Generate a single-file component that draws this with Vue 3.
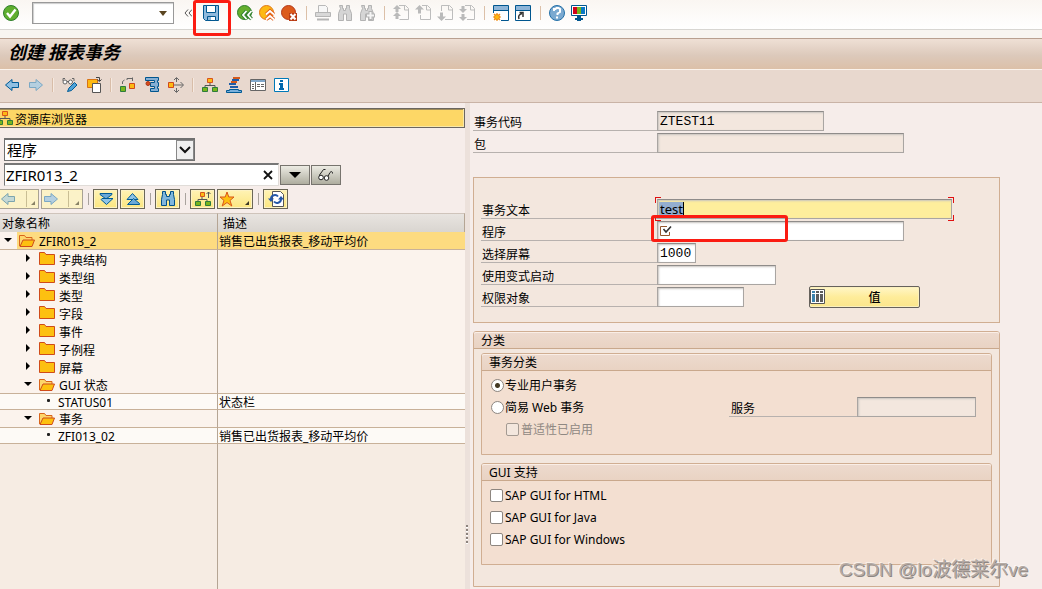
<script setup>
import { ref } from 'vue'

const systemGroups = [
  ['back', 'exit', 'cancel'],
  ['print', 'find', 'find-next'],
  ['page-first', 'page-up', 'page-down', 'page-last'],
  ['session', 'shortcut'],
  ['help', 'monitor']
]
const appGroups = [
  ['left', 'right-dim'],
  ['display-change', 'other-object'],
  ['activate', 'test', 'where-used'],
  ['hierarchy', 'align', 'window', 'info']
]

const tree = [
  { name: 'ZFIR013_2', desc: '销售已出货报表_移动平均价', kind: 'root', open: true },
  { name: '字典结构', kind: 'node' },
  { name: '类型组', kind: 'node' },
  { name: '类型', kind: 'node' },
  { name: '字段', kind: 'node' },
  { name: '事件', kind: 'node' },
  { name: '子例程', kind: 'node' },
  { name: '屏幕', kind: 'node' },
  { name: 'GUI 状态', kind: 'node', open: true },
  { name: 'STATUS01', desc: '状态栏', kind: 'leaf' },
  { name: '事务', kind: 'node', open: true },
  { name: 'ZFI013_02', desc: '销售已出货报表_移动平均价', kind: 'leaf' }
]

const guiOptions = ['SAP GUI for HTML', 'SAP GUI for Java', 'SAP GUI for Windows']

const command = ref('')
const objectType = ref('程序')
const objectName = ref('ZFIR013_2')
const tcode = ref('ZTEST11')
const text = ref('test')
const screen = ref('1000')
const classification = ref('pro')
</script>

<template>
  <div class="page">
    <svg class="sprite" aria-hidden="true">
      <symbol id="i-ok" viewBox="0 0 16 16"><circle cx="8" cy="8" r="7.5" fill="#5fae2e" stroke="#2f7f2b" /><path d="M4 8l3 3.5L12.500 4.500" fill="none" stroke="#fff" stroke-width="2.4" /></symbol>
      <symbol id="i-save" viewBox="0 0 16 16"><path d="M.5.5h15v15h-13l-2-2z" fill="#8fb9dc" stroke="#00568f" /><path d="M3.500 0.500h9v7h-9z" fill="#fff" stroke="#00568f" /><path d="M4.500 11.500h8v4h-8z" fill="#fff" stroke="#00568f" /><path d="M5 12h3v3H5z" fill="#8fb9dc" /></symbol>
      <symbol id="i-back" viewBox="0 0 16 16"><circle cx="7.500" cy="7.500" r="7" fill="#64ae2d" stroke="#2f7f2b" /><path d="M9.500 6L6 10l3.500 4M14.500 6L11 10l3.500 4" fill="none" stroke="#2f7f2b" stroke-width="3.600" /><path d="M9.500 6L6 10l3.500 4M14.500 6L11 10l3.500 4" fill="none" stroke="#fff" stroke-width="1.800" /></symbol>
      <symbol id="i-exit" viewBox="0 0 16 16"><circle cx="7.500" cy="7.500" r="7" fill="#fdb913" stroke="#e07818" /><path d="M7 9.500L11 6l4 3.500M7 14.500L11 11l4 3.500" fill="none" stroke="#e05b18" stroke-width="3.600" /><path d="M7 9.500L11 6l4 3.500M7 14.500L11 11l4 3.500" fill="none" stroke="#fff" stroke-width="1.800" /></symbol>
      <symbol id="i-cancel" viewBox="0 0 16 16"><circle cx="7.500" cy="7.500" r="7" fill="#dc5a1c" stroke="#b5381a" /><path d="M8 8h8v8H8z" fill="#b93a12" /><path d="M9.500 9l5 5.500M14.500 9l-5 5.500" stroke="#fff" stroke-width="2" /></symbol>
      <symbol id="i-print" viewBox="0 0 16 16"><path d="M3.500 7V.5h7l2 2V7" fill="#f7f7f7" stroke="#b9b9b9" /><path d="M.5 7.500h15v4H.5z" fill="#d8d8d8" stroke="#b5b5b5" /><path d="M2 14.500h12" stroke="#b5b5b5" stroke-width="2" /></symbol>
      <symbol id="i-find" viewBox="0 0 16 16"><path d="M2.500.5h3v3h1v2h2v-2h1v-3h3v3l2 5v7h-5V9h-3v6.500h-5v-7l2-5z" fill="#d5d5d5" stroke="#b3b3b3" /></symbol>
      <symbol id="i-find-next" viewBox="0 0 16 16"><path d="M2.500.5h3v3h1v2h2v-2h1v-3h3v3l2 5v7h-5V9h-3v6.500h-5v-7l2-5z" fill="#d5d5d5" stroke="#b3b3b3" /><path d="M11.500 6v9M7 10.500h9" stroke="#b3b3b3" stroke-width="4" /><path d="M11.500 7v7M8 10.500h7" stroke="#f5f5f5" stroke-width="2" /></symbol>
      <symbol id="i-page-first" viewBox="0 0 16 16"><path d="M6 .5h6.500l3 3v11h-9" fill="none" stroke="#bdbdbd" /><path d="M11.500 1v4h4" fill="none" stroke="#bdbdbd" /><path d="M4 0l4 4H5.500v3H2.500V4H0zM4 7l4 4H5.500v3H2.500v-3H0z" fill="#bababa" /></symbol>
      <symbol id="i-page-up" viewBox="0 0 16 16"><path d="M7 .5h5.500l3 3v11h-10V10" fill="none" stroke="#bdbdbd" /><path d="M11.500 1v4h4" fill="none" stroke="#bdbdbd" /><path d="M4.500 0L9 4.500H6v4H3v-4H0z" fill="#bababa" /></symbol>
      <symbol id="i-page-down" viewBox="0 0 16 16"><path d="M4.500 6V.5h8l3 3v11H8" fill="none" stroke="#bdbdbd" /><path d="M11.500 1v4h4" fill="none" stroke="#bdbdbd" /><path d="M4.500 16L9 11.500H6v-4H3v4H0z" fill="#bababa" /></symbol>
      <symbol id="i-page-last" viewBox="0 0 16 16"><path d="M6 .5h6.500l3 3v11H8" fill="none" stroke="#bdbdbd" /><path d="M11.500 1v4h4" fill="none" stroke="#bdbdbd" /><path d="M2.500 1h3v3H8L4 8 0 4h2.500zM2.500 9h3v3H8l-4 4-4-4h2.500z" fill="#bababa" /></symbol>
      <symbol id="i-session" viewBox="0 0 16 16"><path d="M.5.5h15v15H.5z" fill="#fff" stroke="#00568f" /><path d="M1 1h14v4H1z" fill="#8eb5d8" /><path d="M0 5.500h16" stroke="#00568f" /><path d="M0 8h8v8H0z" fill="#fff" /><path d="M4 8v8M0 12h8M1 9l6 6M7 9l-6 6" stroke="#ef8b12" stroke-width="1.200" /><circle cx="4" cy="12" r="2.500" fill="#fdb913" stroke="#ef8b12" /></symbol>
      <symbol id="i-shortcut" viewBox="0 0 16 16"><path d="M.5.5h15v15H.5z" fill="#fff" stroke="#00568f" /><path d="M1 1h14v4H1z" fill="#8eb5d8" /><path d="M0 5.500h16" stroke="#00568f" /><path d="M4 14c-1-3 0-4.500 3-5.500M4.500 7.500H8V12" fill="none" stroke="#333" stroke-width="1.500" /></symbol>
      <symbol id="i-help" viewBox="0 0 16 16"><circle cx="8" cy="8" r="7.500" fill="#7ba9d0" stroke="#2370a8" /><path d="M5 6V4h1.500l1-1h2l1.500 1v3L8.500 8.500V10M8 11.500v2" fill="none" stroke="#fff" stroke-width="2" /></symbol>
      <symbol id="i-monitor" viewBox="0 0 16 16"><path d="M.5.5h15v10H.5z" fill="#fff" stroke="#00568f" /><path d="M2 2h4v7H2z" fill="#d0021b" /><path d="M6 2h4v7H6z" fill="#78b51c" /><path d="M10 2h4v7h-4z" fill="#0878c6" /><path d="M6 11h4v2h2v2h-2v1H6v-1H4v-2h2z" fill="#00568f" /></symbol>
      <symbol id="i-left" viewBox="0 0 16 16"><path d="M1.500 8L8 2.500v3h6.500v5H8v3z" fill="#8fbfe2" stroke="#005b96" /></symbol>
      <symbol id="i-right-dim" viewBox="0 0 16 16"><path d="M14.500 8L8 2.500v3H1.500v5H8v3z" fill="#b4cfe0" stroke="#7ba8c4" /></symbol>
      <symbol id="i-display-change" viewBox="0 0 16 16"><path d="M1 4V1.500h2M12 4V1.500h-2" fill="none" stroke="#666" /><circle cx="3" cy="5" r="2" fill="#fff" stroke="#666" /><circle cx="8.500" cy="5" r="2" fill="#fff" stroke="#666" /><path d="M5 4.500h2" stroke="#666" /><path d="M5.500 14.500L7 11l5.500-5.500L15 8l-5.500 5.500z" fill="#4fa3d8" stroke="#005b96" /></symbol>
      <symbol id="i-other-object" viewBox="0 0 16 16"><path d="M1.500 2.500h10v8h-10z" fill="#fdb913" stroke="#d87316" /><path d="M6.500 6.500h8v9h-8z" fill="#fff" stroke="#555" /><path d="M10 .5h3.500V4M11 2.500l2.500 2 2-2" fill="none" stroke="#444" /></symbol>
      <symbol id="i-activate" viewBox="0 0 16 16"><path d="M.5 9.500h5v5h-5z" fill="#79b51c" stroke="#2d7d3c" /><path d="M9.500 6.500h5v5h-5z" fill="#fdb913" stroke="#d0481c" /><path d="M2.500 7V4.500l2-1.500M7 3V1.500h5M12.500 4V.5" fill="none" stroke="#666" /></symbol>
      <symbol id="i-test" viewBox="0 0 16 16"><path d="M1.500.5h13v3h-1v2h1v4h-1v2h1v3h-8v-3h4v-2h-4v-4h4v-2h-9z" fill="#86afd3" stroke="#00568f" /><circle cx="4" cy="6.500" r="2" fill="#d94b1a" stroke="#a8381a" /></symbol>
      <symbol id="i-where-used" viewBox="0 0 16 16"><path d="M.5 5.500h5v5h-5z" fill="#fdb913" stroke="#d0481c" /><path d="M6 8h9M8.500 5V1M8.500 11v4M12.500 5L15.500 8l-3 3M6 3L8.500 .5 11 3M6 13l2.500 2.500 2.500-2.500" fill="none" stroke="#666" /></symbol>
      <symbol id="i-hierarchy" viewBox="0 0 16 16"><path d="M8 5v4M3 10V8.500h10V10" fill="none" stroke="#555" /><path d="M5.500 1.500h5v4h-5z" fill="#fdb913" stroke="#d8541c" /><path d="M.5 10.500h5v4h-5zM10.500 10.500h5v4h-5z" fill="#79b51c" stroke="#2d7d3c" /></symbol>
      <symbol id="i-align" viewBox="0 0 16 16"><path d="M7 1h7M5 5h6" stroke="#d45b1c" stroke-width="2" /><path d="M6 3h7M3 7h7M4 10h8" stroke="#1f5da8" stroke-width="2" /><path d="M.5 15.500v-2h3v-1h9v1h3v2z" fill="#79b0dc" stroke="#005b96" /></symbol>
      <symbol id="i-window" viewBox="0 0 16 16"><path d="M.5 2.500h15v11H.5z" fill="#fff" stroke="#666" /><path d="M1 3h14v2H1z" fill="#7fa6c9" /><path d="M5.500 5v8M2 7.500h2M2 9.500h2M2 11.500h2M7 7.500h3M11 7.500h3M7 9.500h3M11 9.500h3" stroke="#666" /></symbol>
      <symbol id="i-info" viewBox="0 0 16 16"><path d="M.5 1.500h14v13H.5z" fill="#fff" stroke="#0079b8" /><path d="M6 3h3v2H6zM5 6h4v5h1v2H5v-2h1V8H5z" fill="#0068ad" /></symbol>
      <symbol id="i-expand" viewBox="0 0 16 16"><path d="M2 2.500h12v1L8 8 2 3.500z" fill="#69a9d8" stroke="#005b96" /><path d="M4 7.500h11L8.500 13.500 3 8.500z" fill="#8ec4e6" stroke="#005b96" /></symbol>
      <symbol id="i-collapse" viewBox="0 0 16 16"><path d="M2 8.500h11L7.500 2.500z" fill="#8ec4e6" stroke="#005b96" /><path d="M2.500 13.500h12v-1L8.500 7.500z" fill="#69a9d8" stroke="#005b96" /></symbol>
      <symbol id="i-binoculars" viewBox="0 0 16 16"><path d="M2.500.5h3v3h1v2h3v-2h1v-3h3v3l1 5v6h-5V9h-3v5.500h-5v-6l1-5z" fill="#7fb6dc" stroke="#005089" /></symbol>
      <symbol id="i-subtree" viewBox="0 0 16 16"><path d="M7 5v4M3 10V8.500h9V10M13.500 7V1M11.500 3l2-2 2 2" fill="none" stroke="#555" /><path d="M5.500 1.500h4v4h-4z" fill="#fdb913" stroke="#d8541c" /><path d="M.5 10.500h5v4h-5zM10.500 10.500h5v4h-5z" fill="#79b51c" stroke="#2d7d3c" /></symbol>
      <symbol id="i-star" viewBox="0 0 16 16"><path d="M8 1l1.800 5H15l-4 3.500 1.800 5.500L8 11.500 3.200 15 5 9.500 1 6h5.200z" fill="#fdc010" stroke="#d8541c" /></symbol>
      <symbol id="i-refresh" viewBox="0 0 16 16"><path d="M4.500.5h8l3 3v12h-11z" fill="#fff" stroke="#555" /><path d="M3 8c0-4 5-5 7-2.500M13 8c0 4-5 5-7 2.500" fill="none" stroke="#2457a8" stroke-width="2" /><path d="M0 7.500h6L3 11zM10 8.500h6L13 5z" fill="#2457a8" /></symbol>
      <symbol id="i-glasses" viewBox="0 0 16 16"><path d="M1.500 10V8l4-5.500h2M9 11l3-5.500c1-1.500 3-1 2.500 1" fill="none" stroke="#222" /><circle cx="3" cy="10.500" r="2.300" fill="#fff" stroke="#222" /><circle cx="8.500" cy="11" r="2.300" fill="#fff" stroke="#222" /></symbol>
      <symbol id="i-folder" viewBox="0 0 16 13"><path d="M.5.5h5l1.500 2h8.500v10H.5z" fill="#fdc010" stroke="#cf4b1a" /></symbol>
      <symbol id="i-folder-open" viewBox="0 0 16 13"><path d="M.5 12V1.500h5l1.500 2h6V6" fill="#fdd66a" stroke="#d8641c" /><path d="M1 12.500l3-6.500h11.500l-2.500 6.500z" fill="#fdc010" stroke="#cf4b1a" /></symbol>
      <symbol id="i-required" viewBox="0 0 12 12"><path d="M7 1.500H.5v9h9V7" fill="none" stroke="#96582e" /><path d="M3.500 4l2.500 3L11 1.500" fill="none" stroke="#333" stroke-width="1.600" /></symbol>
      <symbol id="i-columns" viewBox="0 0 16 16"><path d="M.5.5h14v14H.5z" fill="#fff" stroke="#555" /><path d="M2 2h3v2H2zM2 5h3v8H2z" fill="#3c83ad" /><path d="M6 2h3v2H6zM10 2h3v2h-3zM6 5h3v8H6zM10 5h3v8h-3z" fill="#5c5c5c" /></symbol>
    </svg>

    <header class="system-bar">
      <button class="icon-btn" aria-label="确认"><svg><use href="#i-ok" /></svg></button>
      <div class="command">
        <input v-model="command" aria-label="命令" />
        <button aria-label="历史"><i class="caret"></i></button>
      </div>
      <button class="chevrons" aria-label="收起"><svg viewBox="0 0 8 8"><path d="M4 .5L1 4l3 3.500M8 .5L5 4l3 3.500" fill="none" stroke="#555" /></svg></button>
      <div class="save">
        <button class="icon-btn" aria-label="保存"><svg><use href="#i-save" /></svg></button>
        <span class="mark mark-save"></span>
      </div>
      <template v-for="(group, g) in systemGroups" :key="g">
        <span class="bar-sep"></span>
        <button v-for="name in group" :key="name" class="icon-btn" :aria-label="name"><svg><use :href="'#i-' + name" /></svg></button>
      </template>
    </header>
    <div class="strip"></div>
    <h1 class="title">创建 报表事务</h1>
    <nav class="app-bar">
      <template v-for="(group, g) in appGroups" :key="g">
        <span v-if="g" class="app-sep"></span>
        <button v-for="name in group" :key="name" class="icon-btn" :aria-label="name"><svg><use :href="'#i-' + name" /></svg></button>
      </template>
    </nav>

    <main class="content">
      <section class="browser">
        <h2 class="browser-title"><svg><use href="#i-hierarchy" /></svg><span>资源库浏览器</span></h2>
        <div class="type-select">
          <select v-model="objectType" aria-label="对象类型"><option>程序</option></select>
          <span class="drop"><svg viewBox="0 0 12 8"><path d="M1 1l5 5 5-5" fill="none" stroke="#111" stroke-width="2" /></svg></span>
        </div>
        <div class="name-row">
          <div class="name-field">
            <input v-model="objectName" aria-label="对象名称" />
            <button aria-label="清除"><svg viewBox="0 0 10 10"><path d="M1 1l8 8M9 1L1 9" stroke="#111" stroke-width="1.800" /></svg></button>
          </div>
          <button class="grey-btn" aria-label="历史"><i class="caret wide"></i></button>
          <button class="grey-btn" aria-label="显示"><svg><use href="#i-glasses" /></svg></button>
        </div>
        <div class="tree-bar">
          <button class="gold-btn split dim first" aria-label="后退"><svg><use href="#i-left" /></svg><i class="corner"></i></button>
          <button class="gold-btn split dim" aria-label="前进"><svg><use href="#i-right-dim" /></svg><i class="corner"></i></button>
          <span class="tree-sep"></span>
          <button class="gold-btn" aria-label="展开"><svg><use href="#i-expand" /></svg></button>
          <button class="gold-btn" aria-label="折叠"><svg><use href="#i-collapse" /></svg></button>
          <span class="tree-sep"></span>
          <button class="gold-btn" aria-label="查找"><svg><use href="#i-binoculars" /></svg></button>
          <span class="tree-sep"></span>
          <button class="gold-btn" aria-label="上级"><svg><use href="#i-subtree" /></svg></button>
          <button class="gold-btn fav" aria-label="收藏"><svg><use href="#i-star" /></svg><i class="corner"></i></button>
          <span class="tree-sep"></span>
          <button class="gold-btn" aria-label="刷新"><svg><use href="#i-refresh" /></svg></button>
        </div>
        <div class="tree">
          <table>
            <thead><tr><th class="col-name">对象名称</th><th>描述</th></tr></thead>
            <tbody>
              <tr v-for="row in tree" :key="row.name" :class="[row.kind, { open: row.open }]">
                <td>
                  <div class="cell">
                    <span class="twist"><i></i></span>
                    <svg v-if="row.kind !== 'leaf'" class="folder"><use :href="row.open ? '#i-folder-open' : '#i-folder'" /></svg>
                    <span class="name">{{ row.name }}</span>
                  </div>
                </td>
                <td><div class="name">{{ row.desc }}</div></td>
              </tr>
            </tbody>
          </table>
        </div>
      </section>

      <div class="splitter"></div>

      <section class="detail">
        <div class="rows">
          <div class="row"><label for="tcode">事务代码</label><input id="tcode" v-model="tcode" class="field w-code mono" readonly /></div>
          <div class="row"><label for="pkg">包</label><input id="pkg" class="field w-long" readonly /></div>
        </div>

        <div class="panel rows">
          <div class="row"><label for="ttext">事务文本</label><div class="focus"><input id="ttext" v-model="text" class="field active" /></div></div>
          <div class="row">
            <label for="prog">程序</label>
            <div class="required">
              <input id="prog" class="field w-long" />
              <svg><use href="#i-required" /></svg>
              <span class="mark mark-prog"></span>
            </div>
          </div>
          <div class="row"><label for="scr">选择屏幕</label><input id="scr" v-model="screen" class="field w-scr mono" /></div>
          <div class="row"><label for="variant">使用变式启动</label><input id="variant" class="field w-mid" /></div>
          <div class="row">
            <label for="auth">权限对象</label><input id="auth" class="field w-auth" />
            <button class="value-btn"><svg><use href="#i-columns" /></svg><span>值</span></button>
          </div>
        </div>

        <section class="group outer">
          <h3>分类</h3>
          <section class="group">
            <h3>事务分类</h3>
            <div class="options">
              <div class="option"><input id="pro" v-model="classification" type="radio" value="pro" /><label for="pro">专业用户事务</label></div>
              <div class="option">
                <input id="web" v-model="classification" type="radio" value="web" /><label for="web">简易 Web 事务</label>
                <div class="service"><label for="svc">服务</label><input id="svc" class="field w-mid" readonly /></div>
              </div>
              <div class="option nested"><input id="pervasive" type="checkbox" disabled /><label for="pervasive">普适性已启用</label></div>
            </div>
          </section>
          <section class="group">
            <h3>GUI 支持</h3>
            <div class="options">
              <div v-for="(opt, i) in guiOptions" :key="opt" class="option"><input :id="'gui' + i" type="checkbox" /><label :for="'gui' + i">{{ opt }}</label></div>
            </div>
          </section>
        </section>
      </section>
    </main>
    <div class="watermark">CSDN @lo波德莱尔ve</div>
  </div>
</template>

<style>
body { margin: 0; }
</style>

<style scoped>
.page {
  position: relative;
  display: flex;
  flex-direction: column;
  min-height: 100vh;
  overflow: hidden;
  background: #f6edea;
  color: #000;
  font: 12px/18px "Noto Sans", "Noto Sans CJK SC", sans-serif;
}
.page *, .page *::before { box-sizing: border-box; }
.sprite { position: absolute; width: 0; height: 0; }
button { padding: 0; border: 0; background: none; font: inherit; color: inherit; }
input, select { font: inherit; color: inherit; outline: 0; border-radius: 0; }
h1, h2, h3 { margin: 0; font-weight: normal; font-size: 12px; }
svg { display: block; flex: none; width: 16px; height: 16px; }
.icon-btn { flex: none; width: 16px; height: 16px; }

.system-bar {
  display: flex;
  align-items: center;
  gap: 6px;
  height: 30px;
  padding: 0 3px 3px;
  border-bottom: 1px solid #d8d6d2;
  background: linear-gradient(#faf6f2, #fff);
}
.command {
  display: flex;
  width: 142px;
  height: 22px;
  margin-left: 7px;
  border: 1px solid #999;
  box-shadow: inset 1px 1px 1px #ccc;
  background: #fff;
}
.command input { flex: 1; min-width: 0; border: 0; background: none; }
.command button { display: flex; align-items: center; justify-content: center; width: 20px; }
.caret { border: 4px solid transparent; border-top: 5px solid #5a4520; border-bottom: 0; }
.caret.wide { border-width: 6px 6px 0; border-top-color: #000; }
.chevrons { width: 8px; margin-left: 4px; }
.chevrons svg { width: 8px; height: 8px; }
.save { position: relative; display: flex; margin-left: 5px; }
.mark { position: absolute; z-index: 2; border: 3px solid #fb1c12; border-radius: 3px; pointer-events: none; }
.mark-save { inset: -5px -12px -15px -10px; }
.bar-sep { width: 6px; height: 14px; background: linear-gradient(#dcc0a8, #dcc0a8) center / 1px 100% no-repeat; }
.strip { height: 9px; border-bottom: 1px solid #b9a08f; background: #f8f5f0; }
.title {
  height: 31px;
  padding-left: 8px;
  border-bottom: 1px solid #fbf3ec;
  background: linear-gradient(#efe0d5, #dcc9bb 55%, #dcc0a8);
  font: italic bold 18px/25px "Noto Sans CJK SC", sans-serif;
}
.app-bar {
  display: flex;
  align-items: center;
  gap: 8px;
  height: 33px;
  padding: 0 4px 2px;
  border-bottom: 1px solid #c9b3a6;
  background: #e8d8ce;
}
.app-sep { width: 2px; height: 14px; background: linear-gradient(90deg, #d8bda8 50%, #f5e9e0 50%); }

.content { flex: 1; display: grid; grid-template-columns: minmax(0, 465fr) 5px minmax(0, 572fr); }
.browser { display: flex; flex-direction: column; padding-top: 5px; }
.browser-title {
  display: flex;
  align-items: center;
  height: 20px;
  overflow: hidden;
  border: 1px solid #6b6660;
  border-left: 0;
  box-shadow: inset -1px -1px #f9e8a8, inset 0 1px #a08c58;
  background: #fdd766;
}
.browser-title svg { margin: 0 2px 0 -3px; }
.browser-title span { padding-top: 3px; }
.type-select {
  position: relative;
  width: 191px;
  height: 23px;
  margin: 10px 0 2px 4px;
  border: 1px solid #707070;
  border-top-width: 2px;
  background: #fff;
}
.type-select select { width: 100%; height: 100%; padding: 0 2px; border: 0; background: none; appearance: none; font-size: 15px; }
.drop {
  position: absolute;
  inset: 0 0 0 auto;
  display: flex;
  align-items: center;
  justify-content: center;
  width: 18px;
  border: 1px solid #888;
  background: #f0f0f0;
  pointer-events: none;
}
.drop svg { width: 12px; height: 8px; }
.name-row { display: flex; align-items: center; gap: 1px; padding-left: 4px; }
.name-field { display: flex; align-items: center; width: 275px; height: 23px; border: 1px solid #e0dcd8; border-top: 2px solid #777; border-left-color: #777; background: #fff; }
.name-field input { flex: 1; min-width: 0; height: 100%; padding: 0 1px; border: 0; background: none; font-size: 15px; }
.name-field button { padding: 5px; }
.name-field button svg { width: 10px; height: 10px; }
.grey-btn {
  display: flex;
  align-items: center;
  justify-content: center;
  width: 30px;
  height: 20px;
  border: 1px solid #77746e;
  background: linear-gradient(#ecebe3, #aead9f);
}
.tree-bar { display: flex; gap: 2px; margin: 3px 0 4px; }
.gold-btn {
  position: relative;
  display: flex;
  align-items: center;
  width: 25px;
  height: 20px;
  padding-left: 4px;
  border: 1px solid #6b6757;
  box-shadow: inset 0 0 0 1px #fdf3c4;
  background: linear-gradient(#fff3b5, #fbe680);
}
.gold-btn.split { width: 42px; padding-left: 1px; }
.gold-btn.first { width: 39px; padding-left: 0; border-left: 0; }
.gold-btn.dim { border-color: #a8a294; background: linear-gradient(90deg, transparent 26px, #c9be94 26px 27px, transparent 27px), #fbf2c8; }
.gold-btn.dim.first svg { opacity: .5; }
.gold-btn.fav { width: 36px; padding-left: 1px; }
.corner { position: absolute; right: 3px; bottom: 3px; border: 2px solid #3d3826; border-left-color: transparent; border-top-color: transparent; }
.dim .corner { opacity: .6; }
.tree-sep { width: 6px; background: linear-gradient(#a9a39d, #a9a39d) center / 1px 12px no-repeat; }
.tree { flex: 1; background: linear-gradient(#b5a594, #b5a594) 217px 0 / 1px 100% no-repeat, #f6ece3; }
table { width: 100%; border-collapse: separate; border-spacing: 0; table-layout: fixed; }
th, td { height: 18px; padding: 0 0 0 1px; line-height: 15px; text-align: left; font-weight: normal; white-space: nowrap; }
th { height: 19px; padding-left: 5px; border-top: 1px solid #cfc4bb; border-right: 1px solid #b5a594; background: linear-gradient(#e8e4e0, #d9d5d0); }
th.col-name { width: 218px; padding-left: 2px; }
td { background: #fbf3ed; }
td:first-child { padding: 0; border-right: 1px solid #b5a594; }
.leaf td { height: 16px; background: #fdfaf6; }
.leaf td, .root td, .open td { border-bottom: 1px solid #c8b199; }
.root td { background: #fddb80; }
.root td:first-child { background: linear-gradient(90deg, #fbf3ed 17px, #fddb80 17px); }
.cell { display: flex; align-items: center; height: 15px; padding-left: 20px; }
.root .cell { padding-left: 0; }
.name { height: 15px; line-height: 17px; }
.twist { display: flex; justify-content: center; width: 19px; padding-right: 3px; margin-bottom: 2px; }
.twist i { border: 4px solid transparent; border-left: 4px solid #000; border-right: 0; }
.open .twist i { border: 4px solid transparent; border-top: 4px solid #000; border-bottom: 0; }
.leaf .twist { width: 38px; padding: 0 0 0 18px; }
.leaf .twist i { width: 3px; height: 3px; border: 0; border-radius: 1px; background: #222; }
.folder { width: 16px; height: 13px; margin: 0 4px 1px 0; }

.splitter {
  background: repeating-linear-gradient(#8c837d 0 2px, #fff 2px 3px, transparent 3px 4px) 1px 422px / 2px 20px no-repeat, #ece1db;
}

.detail { padding: 8px 42px 2px 3px; }
.rows { display: flex; flex-direction: column; gap: 2px; }
.row { display: flex; align-items: center; height: 20px; }
.row > label { flex: none; width: 184px; height: 20px; padding-left: 1px; border-bottom: 1px solid #b7b1ae; line-height: 24px; }
.panel { margin: 24px 0 8px; padding: 21px 7px 15px; border: 1px solid #d0ae92; background: #f3e7de; }
.panel .row > label { width: 176px; }
.field {
  display: block;
  height: 20px;
  padding: 0 2px;
  border: 1px solid #a9a5a2;
  border-top-color: #8f8c8a;
  box-shadow: inset 1px 1px 2px #c8c4c0;
  background: #fff;
}
.field[readonly] { background: #f3e7de; }
.mono { font: 13px/18px "Liberation Mono", monospace; }
.w-code { width: 167px; }
.w-long { width: 247px; }
.w-scr { width: 39px; }
.w-mid { width: 119px; }
.w-auth { width: 87px; }
.focus { position: relative; width: 295px; }
.focus::before {
  content: "";
  position: absolute;
  inset: -2px;
  background:
    linear-gradient(#e01010, #e01010) 0 0 / 6px 1px, linear-gradient(#e01010, #e01010) 0 0 / 1px 6px,
    linear-gradient(#e01010, #e01010) 100% 0 / 6px 1px, linear-gradient(#e01010, #e01010) 100% 0 / 1px 6px,
    linear-gradient(#e01010, #e01010) 0 100% / 6px 1px, linear-gradient(#e01010, #e01010) 0 100% / 1px 6px,
    linear-gradient(#e01010, #e01010) 100% 100% / 6px 1px, linear-gradient(#e01010, #e01010) 100% 100% / 1px 6px;
  background-repeat: no-repeat;
  pointer-events: none;
}
.active {
  width: 100%;
  font-size: 13px;
  background: linear-gradient(#000, #000) 25px 2px / 1px 15px no-repeat, linear-gradient(#94aecf, #94aecf) 1px 2px / 24px 15px no-repeat, #feee9c;
}
.required { position: relative; }
.required svg { position: absolute; left: 3px; top: 4px; width: 12px; height: 12px; }
.mark-prog { inset: -6px 116px -1px -6px; }
.value-btn {
  display: flex;
  align-items: center;
  width: 111px;
  height: 22px;
  margin-left: 65px;
  border: 1px solid #66625c;
  border-radius: 2px;
  box-shadow: inset 0 0 0 1px #fbf0bd;
  background: linear-gradient(#fff6c8, #feec9a 50%, #fbe68c);
}
.value-btn span { flex: 1; padding: 2px 0 0 4px; text-align: center; font-weight: 500; }
.group { border: 1px solid #d0ae92; border-radius: 3px 3px 0 0; background: #f3dfd1; }
.group.outer { padding-bottom: 21px; background: #f3e7de; }
.group h3 {
  height: 17px;
  padding-left: 7px;
  border-bottom: 1px solid #c9a88c;
  border-radius: 2px 2px 0 0;
  box-shadow: inset 0 1px #faeee6;
  background: linear-gradient(#eddace, #e9d3c3);
  line-height: 17px;
}
.group .group { margin: 4px 7px 0; }
.group .group + .group { margin-top: 8px; }
.options { display: flex; flex-direction: column; gap: 2px; padding: 4px 15px 15px 8px; }
.option { display: flex; align-items: center; height: 20px; }
.option > label { padding-top: 2px; }
.option.nested { padding-left: 16px; color: #8f8882; }
.option > input { flex: none; width: 13px; height: 13px; margin: 0 2px 0 0; border: 1px solid #8d8680; border-radius: 2px; background: #fff; appearance: none; }
.option > input[type="radio"] { border-radius: 50%; margin: 0 1px; }
.option > input[type="radio"]:checked { background: radial-gradient(circle, #453a24 2px, #fff 3px); }
.option > input:disabled { border-color: #a39a92; background: #f3e7de; }
.service { display: flex; margin-left: auto; }
.service label { width: 128px; height: 20px; padding-left: 2px; border-bottom: 1px solid #b7b1ae; line-height: 24px; }

.watermark {
  position: absolute;
  right: 14px;
  bottom: 6px;
  z-index: 3;
  color: #b5aaa4;
  font: 19px/26px "Liberation Sans", "Noto Sans CJK SC", sans-serif;
  text-shadow: 1px 1px #8d8682, -1px -1px #fff8;
}
</style>
